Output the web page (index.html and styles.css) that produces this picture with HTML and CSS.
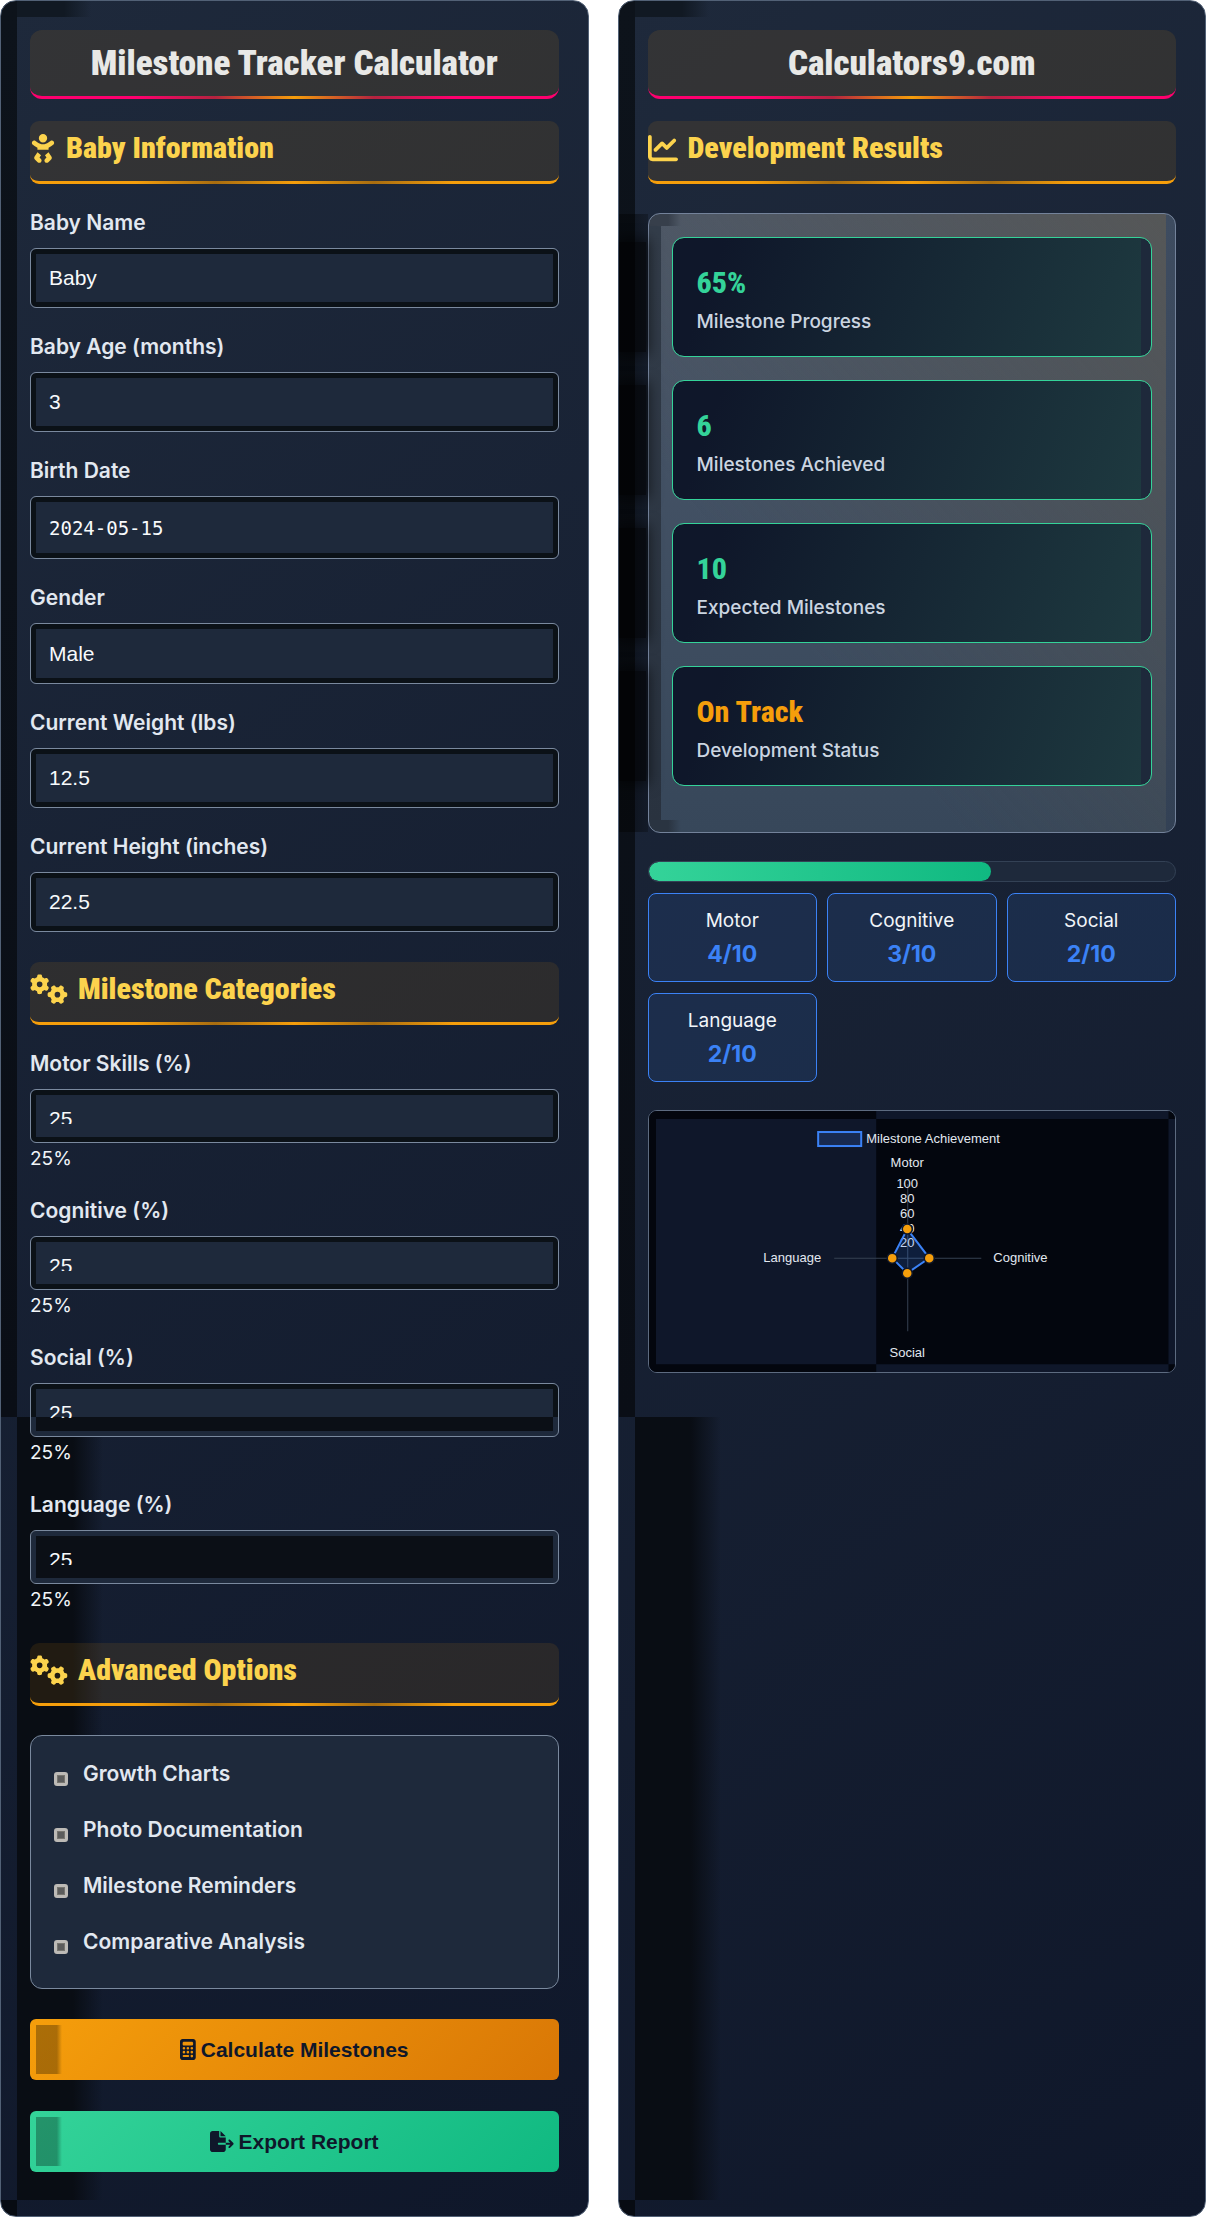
FILE: index.html
```html
<!DOCTYPE html>
<html lang="en">
<head>
    <meta charset="UTF-8">
    <meta name="viewport" content="width=device-width, initial-scale=1.0">
    <title>Milestone Tracker Calculator</title>
    <link rel="stylesheet" href="styles.css">
</head>
<body>
    <!-- shared icons -->
    <svg class="sprite" aria-hidden="true">
        <symbol id="gears" viewBox="0 0 640 512"><path d="M308.500 135.300c7.100-6.300 9.900-16.200 6.200-25c-2.300-5.300-4.800-10.500-7.600-15.500L304 89.400c-3-5-6.300-9.900-9.800-14.600c-5.700-7.600-15.700-10.100-24.700-7.100l-28.200 9.300c-10.700-8.800-23-16-36.200-20.900L199 27.100c-1.900-9.300-9.100-16.700-18.500-17.800C173.900 8.400 167.200 8 160.400 8h-.7c-6.800 0-13.500 .4-20.100 1.200c-9.400 1.100-16.600 8.600-18.500 17.800L115 56.100c-13.300 5-25.500 12.100-36.200 20.900L50.500 67.800c-9-3-19-.5-24.700 7.100c-3.500 4.700-6.800 9.600-9.900 14.600l-3 5.300c-2.800 5-5.300 10.200-7.600 15.600c-3.700 8.700-.9 18.600 6.200 25l22.200 19.800C32.600 161.900 32 168.900 32 176s.6 14.100 1.700 20.900L11.500 216.700c-7.100 6.300-9.900 16.200-6.200 25c2.300 5.300 4.800 10.500 7.600 15.600l3 5.200c3 5.100 6.300 9.900 9.900 14.600c5.700 7.600 15.700 10.100 24.700 7.100l28.200-9.300c10.700 8.800 23 16 36.200 20.900l6.100 29.100c1.900 9.300 9.100 16.700 18.500 17.800c6.700 .8 13.500 1.200 20.400 1.200s13.700-.4 20.400-1.200c9.400-1.100 16.600-8.600 18.500-17.800l6.100-29.100c13.300-5 25.500-12.100 36.200-20.900l28.200 9.300c9 3 19 .5 24.700-7.100c3.500-4.700 6.800-9.500 9.800-14.600l3.100-5.400c2.800-5 5.300-10.200 7.600-15.500c3.700-8.700 .9-18.600-6.200-25l-22.200-19.800c1.100-6.800 1.700-13.800 1.700-20.900s-.6-14.100-1.700-20.900l22.200-19.800zM112 176a48 48 0 1 1 96 0 48 48 0 1 1 -96 0zM504.700 500.500c6.300 7.100 16.200 9.900 25 6.200c5.300-2.300 10.500-4.800 15.500-7.600l5.400-3.100c5-3 9.900-6.300 14.600-9.800c7.600-5.700 10.100-15.700 7.100-24.700l-9.300-28.200c8.800-10.700 16-23 20.900-36.200l29.100-6.100c9.300-1.900 16.700-9.100 17.800-18.500c.8-6.700 1.200-13.500 1.200-20.400s-.4-13.700-1.200-20.400c-1.100-9.400-8.600-16.600-17.800-18.500L583.900 307c-5-13.300-12.100-25.500-20.900-36.200l9.300-28.200c3-9 .5-19-7.100-24.700c-4.700-3.500-9.600-6.800-14.600-9.900l-5.300-3c-5-2.800-10.200-5.300-15.600-7.600c-8.700-3.700-18.600-.9-25 6.200l-19.800 22.200c-6.800-1.100-13.800-1.700-20.900-1.700s-14.100 .6-20.900 1.700l-19.800-22.200c-6.300-7.100-16.200-9.900-25-6.200c-5.300 2.300-10.500 4.800-15.600 7.600l-5.200 3c-5.100 3-9.900 6.300-14.600 9.900c-7.600 5.700-10.100 15.700-7.100 24.700l9.300 28.200c-8.800 10.700-16 23-20.900 36.200L315.100 313c-9.300 1.900-16.700 9.100-17.800 18.500c-.8 6.700-1.200 13.500-1.200 20.400s.4 13.700 1.200 20.400c1.100 9.400 8.600 16.600 17.800 18.500l29.100 6.100c5 13.300 12.100 25.500 20.900 36.200l-9.300 28.200c-3 9-.5 19 7.100 24.700c4.700 3.500 9.500 6.800 14.600 9.800l5.400 3.100c5 2.800 10.200 5.300 15.500 7.600c8.700 3.700 18.600 .9 25-6.200l19.800-22.200c6.800 1.100 13.800 1.700 20.900 1.700s14.100-.6 20.900-1.700l19.800 22.200zM464 304a48 48 0 1 1 0 96 48 48 0 1 1 0-96z"/></symbol>
    </svg>

    <main class="container">
        <section class="panel">
            <h1 class="title">Milestone Tracker Calculator</h1>

            <div class="group">
                <h2 class="heading">
                    <svg class="icon" viewBox="0 0 448 512" aria-hidden="true"><path d="M152 88a72 72 0 1 1 144 0A72 72 0 1 1 152 88zM39.7 144.5c13-17.9 38-21.8 55.9-8.8L131.8 162c26.800 19.500 59.100 30 92.200 30s65.400-10.500 92.200-30l36.200-26.400c17.900-13 42.900-9 55.900 8.800s9 42.900-8.800 55.900l-36.200 26.400c-13.600 9.900-28.100 18.200-43.300 25V288H128V251.700c-15.200-6.700-29.700-15.100-43.300-25L48.500 200.300c-17.900-13-21.800-38-8.800-55.900zm89.800 184.800l60.600 53-26 37.200 24.300 24.300c15.600 15.600 15.600 40.900 0 56.600s-40.900 15.600-56.600 0l-48-48C70 438.600 68.100 417 79.200 401.100l50.200-71.800zm128.500 53l60.600-53 50.200 71.800c11.100 15.900 9.200 37.500-4.500 51.200l-48 48c-15.600 15.600-40.900 15.600-56.600 0s-15.600-40.900 0-56.600L284 419.400l-26-37.200z"/></svg>
                    Baby Information
                </h2>
                <div class="field">
                    <label for="name">Baby Name</label>
                    <input class="control" type="text" id="name" value="Baby">
                </div>
                <div class="field">
                    <label for="age">Baby Age (months)</label>
                    <input class="control" type="text" id="age" value="3">
                </div>
                <div class="field">
                    <label for="birth">Birth Date</label>
                    <input class="control date" type="text" id="birth" value="2024-05-15">
                </div>
                <div class="field">
                    <label for="gender">Gender</label>
                    <select class="control" id="gender">
                        <option>Male</option>
                        <option>Female</option>
                    </select>
                </div>
                <div class="field">
                    <label for="weight">Current Weight (lbs)</label>
                    <input class="control" type="text" id="weight" value="12.5">
                </div>
                <div class="field">
                    <label for="height">Current Height (inches)</label>
                    <input class="control" type="text" id="height" value="22.5">
                </div>
            </div>

            <div class="group">
                <h2 class="heading"><svg class="icon wide" aria-hidden="true"><use href="#gears"/></svg> Milestone Categories</h2>
                <div class="field">
                    <label for="motor">Motor Skills (%)</label>
                    <div class="control short"><div class="slot"><input type="text" id="motor" value="25"></div></div>
                    <output class="value" for="motor">25%</output>
                </div>
                <div class="field">
                    <label for="cognitive">Cognitive (%)</label>
                    <div class="control short"><div class="slot"><input type="text" id="cognitive" value="25"></div></div>
                    <output class="value" for="cognitive">25%</output>
                </div>
                <div class="field">
                    <label for="social">Social (%)</label>
                    <div class="control short half"><div class="slot"><input type="text" id="social" value="25"></div></div>
                    <output class="value" for="social">25%</output>
                </div>
                <div class="field">
                    <label for="language">Language (%)</label>
                    <div class="control short dark"><div class="slot"><input type="text" id="language" value="25"></div></div>
                    <output class="value" for="language">25%</output>
                </div>
            </div>

            <div class="group">
                <h2 class="heading"><svg class="icon wide" aria-hidden="true"><use href="#gears"/></svg> Advanced Options</h2>
                <div class="options">
                    <label class="option"><input type="checkbox"> Growth Charts</label>
                    <label class="option"><input type="checkbox"> Photo Documentation</label>
                    <label class="option"><input type="checkbox"> Milestone Reminders</label>
                    <label class="option"><input type="checkbox"> Comparative Analysis</label>
                </div>
            </div>

            <div class="actions">
                <button class="btn calculate" type="button">
                    <svg viewBox="0 0 384 512" aria-hidden="true"><path fill-rule="evenodd" d="M64 0C28.700 0 0 28.700 0 64V448c0 35.300 28.700 64 64 64H320c35.300 0 64-28.700 64-64V64c0-35.300-28.700-64-64-64H64zM96 64H288c17.700 0 32 14.300 32 32v32c0 17.700-14.300 32-32 32H96c-17.700 0-32-14.300-32-32V96c0-17.700 14.300-32 32-32zM64 224a32 32 0 1 1 64 0 32 32 0 1 1 -64 0zM160 224a32 32 0 1 1 64 0 32 32 0 1 1 -64 0zM256 224a32 32 0 1 1 64 0 32 32 0 1 1 -64 0zM64 320a32 32 0 1 1 64 0 32 32 0 1 1 -64 0zM160 320a32 32 0 1 1 64 0 32 32 0 1 1 -64 0zM256 320a32 32 0 1 1 64 0 32 32 0 1 1 -64 0zM88 392H200a24 24 0 0 1 0 48H88a24 24 0 0 1 0-48zM256 416a32 32 0 1 1 64 0 32 32 0 1 1 -64 0z"/></svg>
                    Calculate Milestones
                </button>
                <button class="btn export" type="button">
                    <svg viewBox="0 0 576 512" aria-hidden="true"><path d="M0 64C0 28.700 28.700 0 64 0H224V128c0 17.700 14.300 32 32 32H384V288H216c-13.300 0-24 10.700-24 24s10.700 24 24 24H384V448c0 35.300-28.700 64-64 64H64c-35.300 0-64-28.700-64-64V64zM384 336V288H494.100l-39-39c-9.400-9.400-9.400-24.600 0-33.900s24.600-9.400 33.900 0l80 80c9.400 9.400 9.400 24.600 0 33.900l-80 80c-9.400 9.400-24.600 9.400-33.900 0s-9.400-24.600 0-33.900l39-39H384zm0-208H256V0L384 128z"/></svg>
                    Export Report
                </button>
            </div>
        </section>

        <section class="panel">
            <h1 class="title">Calculators9.com</h1>
            <h2 class="heading">
                <svg class="icon square" viewBox="0 0 512 512" aria-hidden="true"><path d="M64 64c0-17.700-14.300-32-32-32S0 46.300 0 64V400c0 44.200 35.800 80 80 80H480c17.700 0 32-14.300 32-32s-14.300-32-32-32H80c-8.800 0-16-7.200-16-16V64zm406.600 86.600c12.500-12.500 12.500-32.800 0-45.300s-32.800-12.500-45.300 0L320 210.700l-57.400-57.400c-12.500-12.500-32.800-12.500-45.300 0l-112 112c-12.500 12.500-12.500 32.800 0 45.300s32.800 12.500 45.300 0L240 221.300l57.400 57.400c12.500 12.500 32.800 12.500 45.300 0l128-128z"/></svg>
                Development Results
            </h2>

            <div class="results">
                <div class="card">
                    <div class="number">65%</div>
                    <div class="caption">Milestone Progress</div>
                </div>
                <div class="card">
                    <div class="number">6</div>
                    <div class="caption">Milestones Achieved</div>
                </div>
                <div class="card">
                    <div class="number">10</div>
                    <div class="caption">Expected Milestones</div>
                </div>
                <div class="card">
                    <div class="number status">On Track</div>
                    <div class="caption">Development Status</div>
                </div>
            </div>

            <div class="progress"><div class="progress-fill" style="width: 65%"></div></div>

            <div class="categories">
                <div class="category">Motor<strong>4/10</strong></div>
                <div class="category">Cognitive<strong>3/10</strong></div>
                <div class="category">Social<strong>2/10</strong></div>
                <div class="category">Language<strong>2/10</strong></div>
            </div>

            <div class="chart">
                <svg viewBox="0 0 526 261" role="img" aria-label="Milestone Achievement">
                    <rect width="526" height="261" fill="#0f172a"/>
                    <path d="M0 0H227V8H7V253H227V261H0zM227 8H519V253H227zM519 0H526V8H519zM519 253H526V261H519z" fill="#03060e"/>
                    <rect x="169" y="21" width="43" height="14" fill="#182a50" stroke="#3b82f6" stroke-width="2"/>
                    <path d="M258.500 73V220M185 147H332" stroke="#364152"/>
                    <g class="chart-text">
                        <text x="217" y="32">Milestone Achievement</text>
                        <g text-anchor="middle">
                            <text x="258" y="56">Motor</text>
                            <text x="258" y="77">100</text>
                            <text x="258" y="92">80</text>
                            <text x="258" y="107">60</text>
                            <text x="258" y="122">40</text>
                            <text x="258" y="136">20</text>
                            <text x="258" y="246">Social</text>
                        </g>
                        <text x="172" y="151" text-anchor="end">Language</text>
                        <text x="344" y="151">Cognitive</text>
                    </g>
                    <path d="M258 118L280 147L258 162L243 147Z" fill="#3b82f6" fill-opacity=".2" stroke="#3b82f6" stroke-width="2"/>
                    <g fill="#f59e0b" stroke="#0f172a" stroke-width="1.500">
                        <circle cx="258" cy="118" r="5"/>
                        <circle cx="280" cy="147" r="5"/>
                        <circle cx="258" cy="162" r="5"/>
                        <circle cx="243" cy="147" r="5"/>
                    </g>
                </svg>
            </div>
        </section>
    </main>
</body>
</html>
```
FILE: styles.css
```css
* {
    box-sizing: border-box;
}
body {
    margin: 0;
    background: #fff;
    color: #f1f5f9;
    font-family: Inter, 'Liberation Sans', sans-serif;
    font-size: 19px;
    line-height: 28px;
}
.sprite {
    display: none;
}
.container {
    display: grid;
    grid-template-columns: 1fr 1fr;
    gap: 29px;
}
.panel {
    position: relative;
    padding: 29px 29px 44px;
    border: 1px solid #526176;
    border-radius: 16px;
    /* shaded edges on the left side, then the base gradient */
    background:
        linear-gradient(#0d131b, #0a0e16) 0 0 / 16px 1416px no-repeat,
        linear-gradient(90deg, #111923 70%, transparent) 0 0 / 90px 16px no-repeat,
        linear-gradient(90deg, #090d14 65%, transparent) 16px 1416px / 86px calc(100% - 1432px) no-repeat,
        linear-gradient(#070b12, #070b12) 0 100% / 16px 16px no-repeat,
        linear-gradient(145deg, #1e293b, #0f172a);
}

/* headings */
.title,
.heading {
    position: relative;
    margin: 0 0 22px;
    border-bottom: 3px solid #ff006e;
    border-radius: 12px;
    background: rgba(245, 158, 11, 0.1);
    font-family: 'Roboto Condensed', Roboto, sans-serif;
    font-weight: 900;
}
.title {
    padding: 12px 0 10px;
    color: #e8e8e6;
    font-size: 35px;
    line-height: 44px;
    text-align: center;
}
.heading {
    display: flex;
    align-items: center;
    gap: 10px;
    margin-bottom: 25px;
    padding: 6px 0 12px;
    border-color: #f59e0b;
    border-radius: 9px;
    color: #fcd34d;
    font-size: 30px;
    font-weight: 900;
    line-height: 42px;
}
.title::after,
.heading::after {
    content: '';
    position: absolute;
    right: 0;
    bottom: -3px;
    left: 0;
    height: 3px;
    background: linear-gradient(90deg, transparent 20%, #b4233f 35%, #f59e0b 50%, #b4233f 65%, transparent 80%);
}
.heading::after {
    background: linear-gradient(90deg, transparent 20%, #a86d10 35%, #f59e0b 50%, #a86d10 65%, transparent 80%);
}
.icon {
    width: 26px;
    height: 30px;
    fill: currentColor;
}
.icon.wide {
    width: 38px;
}
.icon.square {
    width: 30px;
}

/* form */
.group {
    margin-bottom: 30px;
}
.field + .field {
    margin-top: 25px;
}
.field label {
    display: block;
    margin-bottom: 11px;
    color: #e2e8f0;
    font-size: 21px;
    font-weight: 600;
}
.control {
    --fill: linear-gradient(#1e293b, #1e293b);
    --ring: linear-gradient(#0b1117, #0b1117);
    display: block;
    width: 100%;
    height: 60px;
    padding: 17px 18px;
    border: 1px solid #7a899e;
    border-radius: 6px;
    background:
        var(--fill) center / calc(100% - 10px) calc(100% - 10px) no-repeat padding-box,
        var(--ring) padding-box;
    color: #f8fafc;
    font-family: 'Liberation Sans', Arial, sans-serif;
    font-size: 21px;
    line-height: 24px;
    appearance: none;
}
.control.date {
    height: 63px;
    font-family: 'DejaVu Sans Mono', monospace;
    font-size: 19px;
}
select.control {
    height: 61px;
}
/* shorter boxes only leave part of a text line visible */
.control.short {
    height: 54px;
    padding: 17px 18px;
}
.slot {
    height: 17px;
    overflow: hidden;
}
.slot input {
    display: block;
    width: 100%;
    height: 24px;
    padding: 0;
    border: 0;
    background: none;
    color: inherit;
    font: inherit;
}
.control.half {
    --fill: linear-gradient(#1e293b 28px, #0b0f16 28px);
    --ring: linear-gradient(#0b1117 33px, #1e293b 33px);
}
.control.dark {
    --fill: linear-gradient(#0b0f16, #0b0f16);
    --ring: linear-gradient(#1e293b, #1e293b);
}
.value {
    display: block;
    margin-top: 2px;
    line-height: 27px;
}

/* advanced options */
.options {
    display: grid;
    gap: 28px;
    padding: 24px 23px 32px;
    border: 1px solid #7a899e;
    border-radius: 12px;
    background: #1e293b;
}
.heading + .options {
    margin-top: 29px;
}
.option {
    display: flex;
    align-items: center;
    gap: 15px;
    color: #e2e8f0;
    font-size: 21px;
    font-weight: 600;
}
.option input {
    width: 14px;
    height: 14px;
    margin: 10px 0 0;
    border: 3px solid #bdbab6;
    border-radius: 3px;
    background: #5c5c5c;
    box-shadow: inset 0 0 0 1px #77756f;
    appearance: none;
}

/* buttons */
.actions {
    display: grid;
    gap: 31px;
}
.btn {
    position: relative;
    display: flex;
    justify-content: center;
    align-items: center;
    gap: 5px;
    height: 61px;
    border: 0;
    border-radius: 6px;
    color: #0f172a;
    font-family: 'Liberation Sans', Arial, sans-serif;
    font-size: 21px;
    font-weight: 700;
    cursor: pointer;
}
.btn svg {
    height: 21px;
    fill: currentColor;
}
.btn::before {
    content: '';
    position: absolute;
    top: 6px;
    bottom: 6px;
    left: 6px;
    width: 26px;
    background: linear-gradient(90deg, rgba(0, 0, 0, 0.3) 80%, transparent);
}
.calculate {
    background: linear-gradient(135deg, #f59e0b, #d97706);
}
.export {
    background: linear-gradient(135deg, #34d399, #10b981);
}

/* results */
.results {
    position: relative;
    display: grid;
    gap: 23px;
    margin: 28px 0;
    padding: 23px 23px 46px;
    border: 1px solid #73829a;
    border-radius: 12px;
    background:
        linear-gradient(#333d4a, #29323f) 0 12px / 12px calc(100% - 24px) no-repeat,
        linear-gradient(90deg, #373f4b 60%, transparent) 0 0 / 32px 12px no-repeat,
        linear-gradient(90deg, #2a3441 60%, transparent) 0 100% / 32px 12px no-repeat,
        linear-gradient(#3e4c60, #334155) 100% 0 / 9px 100% no-repeat,
        linear-gradient(50deg, rgba(85, 85, 85, 0) 30%, rgba(92, 86, 74, 0.6)),
        linear-gradient(#4b586b, #37475a);
}
.heading + .results {
    margin-top: 29px;
}
.results::before {
    content: '';
    position: absolute;
    top: 0;
    bottom: 0;
    left: -30px;
    width: 29px;
    background: linear-gradient(90deg, rgba(0, 0, 0, 0.4) 50%, rgba(0, 0, 0, 0.25));
}
.card {
    position: relative;
    padding: 27px 24px 21px;
    border: 1px solid #34d399;
    border-radius: 12px;
    background:
        linear-gradient(#1e293b, #1e293b) 100% 0 / 10px 100% no-repeat padding-box,
        linear-gradient(110deg, #0f172a 10%, #1e3a40) padding-box;
}
.card::before {
    content: '';
    position: absolute;
    top: 4px;
    bottom: 4px;
    left: -54px;
    width: 27px;
    background: rgba(0, 0, 0, 0.55);
    box-shadow: 0 0 14px 3px rgba(0, 0, 0, 0.55);
    clip-path: inset(-24px -24px -24px 0);
}
.number {
    margin-bottom: 8px;
    color: #34d399;
    font-family: 'Roboto Condensed', Roboto, sans-serif;
    font-size: 30px;
    font-weight: 800;
    line-height: 36px;
}
.number.status {
    color: #f59e0b;
}
.caption {
    color: #cbd5e1;
    font-weight: 500;
    line-height: 26px;
}
.progress {
    height: 21px;
    margin-bottom: 11px;
    border: 1px solid #334155;
    border-radius: 11px;
    background: #1e293b;
    overflow: hidden;
}
.progress-fill {
    height: 100%;
    border-radius: 10px;
    background: linear-gradient(90deg, #34d399, #10b981);
}
.categories {
    display: grid;
    grid-template-columns: repeat(3, 1fr);
    gap: 11px 10px;
    margin-bottom: 28px;
}
.category {
    padding: 13px;
    border: 1px solid #3b82f6;
    border-radius: 8px;
    background: rgba(59, 130, 246, 0.12);
    text-align: center;
}
.category strong {
    display: block;
    margin-top: 5px;
    color: #3b82f6;
    font-size: 23px;
    font-weight: 700;
}
.chart {
    border: 1px solid #5d6b80;
    border-radius: 9px;
    overflow: hidden;
}
.chart svg {
    display: block;
    width: 100%;
}
.chart-text {
    fill: #e2e8f0;
    font-family: 'Liberation Sans', Arial, sans-serif;
    font-size: 13px;
}
```
